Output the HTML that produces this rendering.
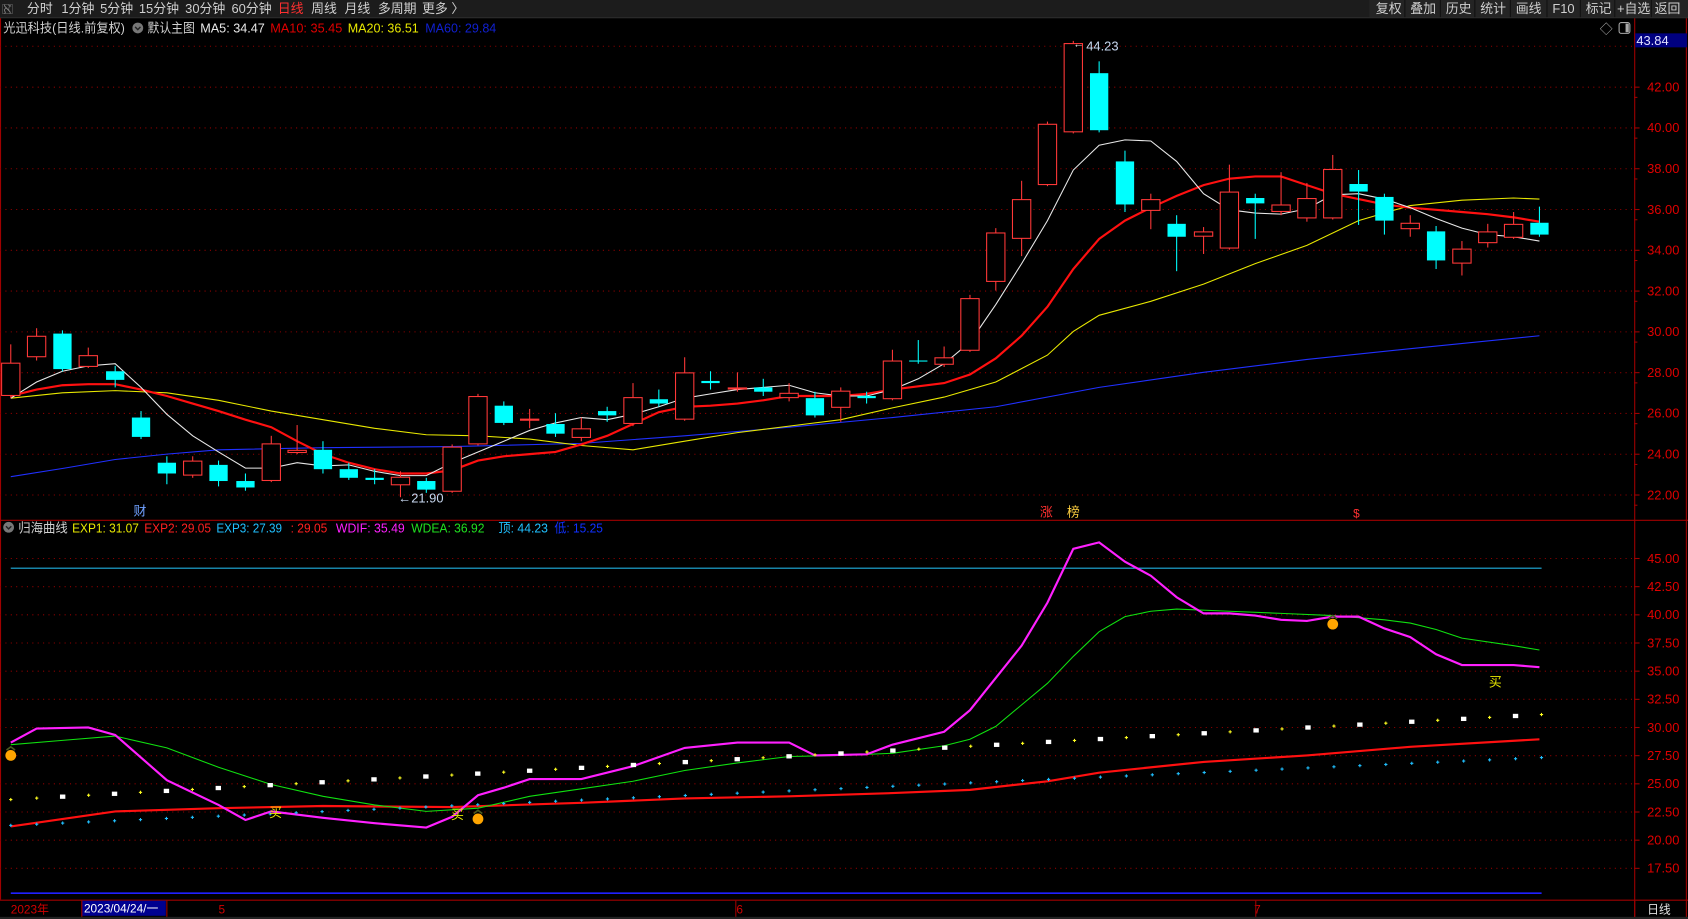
<!DOCTYPE html>
<html><head><meta charset="utf-8"><style>
html,body{margin:0;padding:0;background:#000;width:1688px;height:919px;overflow:hidden}
svg{display:block}
text{font-family:"Liberation Sans","Noto Sans CJK SC",sans-serif}
</style></head><body>
<svg id="s" width="1688" height="919" viewBox="0 0 1568 854" preserveAspectRatio="none" xmlns="http://www.w3.org/2000/svg">
<rect width="1568" height="854" fill="#000"/>
<rect width="1568" height="16" fill="#1c1c1c"/>
<line x1="0" y1="16.5" x2="1568" y2="16.5" stroke="#333"/>
<g font-size="12" fill="#d0d0d0">
<text x="2" y="12" font-size="10" fill="#888">ℵ⃞</text>
<text x="25" y="12">分时</text><text x="57" y="12">1分钟</text><text x="93" y="12">5分钟</text><text x="129" y="12">15分钟</text><text x="172" y="12">30分钟</text><text x="215" y="12">60分钟</text>
<text x="258" y="12" fill="#ff3030">日线</text><text x="289" y="12">周线</text><text x="320" y="12">月线</text><text x="351" y="12">多周期</text><text x="392" y="12">更多 〉</text>
</g>
<g font-size="12" fill="#d0d0d0">
<rect x="1272" y="0" width="296" height="16" fill="#242424"/>
<text x="1278" y="12">复权</text><text x="1310" y="12">叠加</text><text x="1343" y="12">历史</text><text x="1375" y="12">统计</text><text x="1408" y="12">画线</text><text x="1442" y="12">F10</text><text x="1473" y="12">标记</text><text x="1502" y="12">+自选</text><text x="1537" y="12">返回</text>
<g stroke="#111"><line x1="1305" y1="0" x2="1305" y2="16"/><line x1="1338" y1="0" x2="1338" y2="16"/><line x1="1370" y1="0" x2="1370" y2="16"/><line x1="1403" y1="0" x2="1403" y2="16"/><line x1="1437" y1="0" x2="1437" y2="16"/><line x1="1468" y1="0" x2="1468" y2="16"/><line x1="1500" y1="0" x2="1500" y2="16"/><line x1="1534" y1="0" x2="1534" y2="16"/></g>
</g>
<g stroke="#a00000" stroke-width="1">
<line x1="1518.5" y1="17" x2="1518.5" y2="854"/>
<line x1="0" y1="483.5" x2="1568" y2="483.5"/>
<line x1="0" y1="836.5" x2="1568" y2="836.5"/>
<line x1="1566.5" y1="17" x2="1566.5" y2="854"/>
<line x1="0.5" y1="17" x2="0.5" y2="836"/>
</g>
<g id="grid"></g>
<g id="lines"></g>
<g id="candles"></g>
<g font-size="12">
<text x="3" y="30" fill="#d0d0d0" textLength="113" lengthAdjust="spacingAndGlyphs">光迅科技(日线.前复权)</text>
<circle cx="128" cy="26" r="5" fill="#777"/><path d="M125.5 25 L128 27.5 L130.5 25" stroke="#222" fill="none" stroke-width="1.3"/>
<text x="137" y="30" fill="#d0d0d0" textLength="44" lengthAdjust="spacingAndGlyphs">默认主图</text>
<text x="186" y="30" fill="#e8e8e8" textLength="60" lengthAdjust="spacingAndGlyphs">MA5: 34.47</text>
<text x="251" y="30" fill="#e00000" textLength="67" lengthAdjust="spacingAndGlyphs">MA10: 35.45</text>
<text x="323" y="30" fill="#e8e800" textLength="66" lengthAdjust="spacingAndGlyphs">MA20: 36.51</text>
<text x="395" y="30" fill="#1020d0" textLength="66" lengthAdjust="spacingAndGlyphs">MA60: 29.84</text>
<text x="1486" y="31" fill="#aaa">◇</text>
<rect x="1504" y="21" width="10" height="10" rx="2" fill="none" stroke="#aaa"/><rect x="1510" y="22" width="3" height="8" fill="#aaa"/>
<rect x="1519" y="31" width="48" height="13" fill="#000080"/>
<text x="1520" y="42" fill="#e0e0ff">43.84</text>
<text x="1009" y="47" fill="#c8d8f0">44.23</text>
<text x="997" y="44" fill="#ddd" font-size="10">←</text>
<text x="370" y="467" fill="#c8d8f0">←21.90</text>
<text x="124" y="479" fill="#6fa0ff">财</text>
<text x="966" y="480" fill="#ff3030">涨</text><text x="991" y="480" fill="#ffd040">榜</text>
<text x="1257" y="481" fill="#ff3030" font-size="11">$</text>
</g>
<g font-size="12">
<circle cx="8" cy="490" r="5" fill="#777"/><path d="M5.5 489 L8 491.5 L10.5 489" stroke="#222" fill="none" stroke-width="1.3"/>
<text x="17" y="495" fill="#d0d0d0" textLength="46" lengthAdjust="spacingAndGlyphs">归海曲线</text>
<text x="67" y="495" fill="#e8e800" textLength="62" lengthAdjust="spacingAndGlyphs">EXP1: 31.07</text>
<text x="134" y="495" fill="#ff2020" textLength="62" lengthAdjust="spacingAndGlyphs">EXP2: 29.05</text>
<text x="201" y="495" fill="#20c0ff" textLength="61" lengthAdjust="spacingAndGlyphs">EXP3: 27.39</text>
<text x="270" y="495" fill="#ff2020" textLength="34" lengthAdjust="spacingAndGlyphs">: 29.05</text>
<text x="312" y="495" fill="#ff20ff" textLength="64" lengthAdjust="spacingAndGlyphs">WDIF: 35.49</text>
<text x="382" y="495" fill="#20e020" textLength="68" lengthAdjust="spacingAndGlyphs">WDEA: 36.92</text>
<text x="463" y="495" fill="#20c0ff" textLength="46" lengthAdjust="spacingAndGlyphs">顶: 44.23</text>
<text x="515" y="495" fill="#1030ff" textLength="45" lengthAdjust="spacingAndGlyphs">低: 15.25</text>
</g>
<g id="axis" font-size="12" fill="#e00000"></g>
<g font-size="11">
<text x="10" y="849" fill="#d00000">2023年</text>
<rect x="76" y="837" width="78" height="14" fill="#000090"/>
<text x="78" y="848" fill="#fff">2023/04/24/一</text>
<text x="203" y="849" fill="#d00000">5</text>
<text x="684" y="849" fill="#d00000">6</text>
<text x="1165" y="849" fill="#d00000">7</text>
<text x="1530" y="849" fill="#e0e0e0">日线</text>
</g>
<g stroke="#a00000"><line x1="76" y1="837" x2="76" y2="852"/><line x1="155" y1="837" x2="155" y2="852"/><line x1="683.5" y1="837" x2="683.5" y2="852"/><line x1="1166.5" y1="837" x2="1166.5" y2="852"/><line x1="1518.5" y1="837" x2="1518.5" y2="852"/></g>
<rect x="0" y="852" width="1568" height="2" fill="#222"/>
</svg>
<script>
var NS="http://www.w3.org/2000/svg";
function el(p,t,a){var e=document.createElementNS(NS,t);for(var k in a)e.setAttribute(k,a[k]);p.appendChild(e);return e;}
var grid=document.getElementById('grid'),lines=document.getElementById('lines'),cg=document.getElementById('candles'),ax=document.getElementById('axis');
var pl=[42,40,38,36,34,32,30,28,26,24,22];
pl.forEach(function(p){var y=81+(42-p)*18.95;el(grid,'line',{x1:0,x2:1518,y1:y,y2:y,stroke:'#900000','stroke-dasharray':'1 4'});var t=el(ax,'text',{x:1530,y:y+4});t.textContent=p.toFixed(2);el(grid,'line',{x1:1518,x2:1523,y1:y,y2:y,stroke:'#a00000'});el(grid,'line',{x1:1518,x2:1521,y1:y+9.5,y2:y+9.5,stroke:'#a00000'});});
el(grid,'line',{x1:0,x2:1518,y1:43,y2:43,stroke:'#900000','stroke-dasharray':'1 4'});
var il=[45,42.5,40,37.5,35,32.5,30,27.5,25,22.5,20,17.5];
il.forEach(function(v){var y=519+(45-v)*10.47;el(grid,'line',{x1:0,x2:1518,y1:y,y2:y,stroke:'#900000','stroke-dasharray':'1 4'});var t=el(ax,'text',{x:1530,y:y+4});t.textContent=v.toFixed(2);el(grid,'line',{x1:1518,x2:1523,y1:y,y2:y,stroke:'#a00000'});});
function poly(pts,c,w){el(lines,'polyline',{points:pts.map(function(p){return p.join(',')}).join(' '),fill:'none',stroke:c,'stroke-width':w||1});}
el(lines,'line',{x1:10,x2:1432,y1:528,y2:528,stroke:'#20b0e0'});
el(lines,'line',{x1:10,x2:1432,y1:830,y2:830,stroke:'#2020ff','stroke-width':1.5});
poly([[10,443],[60,435],[107,427],[155,422],[203,418],[300,416],[420,415],[540,412],[636,405],[733,397],[829,388],[925,378],[1021,360],[1118,346],[1214,334],[1310,324],[1430,312]],'#2030ff');
poly([[10,370],[58,365],[107,363],[155,365],[203,372],[252,382],[300,390],[348,398],[396,404],[444,405],[492,408],[540,414],[588,418],[636,410],[685,402],[733,396],[781,390],[829,379],[877,369],[925,355],[973,330],[997,308],[1021,293],[1069,280],[1118,264],[1166,245],[1214,228],[1262,205],[1310,191],[1358,186],[1406,184],[1430,185]],'#e8e800');
poly([[10,368],[34,362],[58,358],[82,357],[107,357],[131,362],[155,368],[179,375],[203,382],[228,390],[252,397],[276,410],[300,422],[324,430],[348,436],[372,440],[396,440],[420,437],[444,428],[468,424],[492,422],[516,420],[540,413],[564,405],[588,394],[612,383],[636,378],[660,377],[685,375],[709,372],[733,368],[757,368],[781,368],[805,366],[829,362],[853,359],[877,356],[901,348],[925,333],[949,312],[973,285],[997,250],[1021,222],[1045,205],[1069,193],[1093,182],[1118,172],[1142,166],[1166,164],[1190,164],[1214,172],[1238,180],[1262,185],[1286,190],[1310,193],[1334,195],[1358,197],[1382,199],[1406,202],[1430,206]],'#ff1010',2);
poly([[10,370],[34,355],[58,345],[82,340],[107,338],[131,360],[155,385],[179,405],[203,420],[228,435],[252,435],[276,430],[300,433],[324,432],[348,438],[372,442],[396,442],[420,430],[444,420],[468,410],[492,400],[516,393],[540,388],[564,390],[588,385],[612,378],[636,370],[660,366],[685,362],[709,360],[733,358],[757,365],[781,368],[805,368],[829,362],[853,352],[877,338],[901,318],[925,283],[949,245],[973,205],[997,158],[1021,135],[1045,130],[1069,131],[1093,150],[1118,180],[1142,195],[1166,198],[1190,199],[1214,194],[1238,181],[1262,180],[1286,185],[1310,193],[1334,203],[1358,212],[1382,218],[1406,220],[1430,224]],'#e8e8e8');
var C=[[10,337,367,320,370,'r'],[34,312,331,305,335,'r'],[58,310,343,307,345,'c'],[82,330,340,323,342,'r'],[107,345,353,340,360,'c'],[131,388,406,382,408,'c'],[155,430,440,424,450,'c'],[179,428,441,424,444,'r'],[203,432,447,428,452,'c'],[228,447,453,440,456,'c'],[252,412,446,405,448,'r'],[276,418,420,395,422,'r'],[300,418,436,410,440,'c'],[324,436,444,430,446,'c'],[348,444,446,436,450,'c'],[372,443,450,438,462,'r'],[396,447,455,444,458,'c'],[420,415,456,413,458,'r'],[444,368,412,366,414,'r'],[468,377,393,373,395,'c'],[492,389,390,380,398,'r'],[516,394,403,384,406,'c'],[540,398,406,388,410,'r'],[564,382,386,378,392,'c'],[588,369,393,356,396,'r'],[612,371,375,362,378,'c'],[636,346,389,332,391,'r'],[660,354,356,345,362,'c'],[685,360,361,346,364,'r'],[709,360,364,352,368,'c'],[733,365,369,356,373,'r'],[757,370,386,364,388,'c'],[781,363,378,360,392,'r'],[805,368,370,364,375,'c'],[829,335,370,325,372,'r'],[853,335,336,316,338,'c'],[877,332,338,322,341,'r'],[901,277,325,274,327,'r'],[925,216,261,212,270,'r'],[949,185,221,168,238,'r'],[973,115,171,113,173,'r'],[997,40,122,38,124,'r'],[1021,68,121,57,123,'c'],[1045,150,190,140,197,'c'],[1069,185,195,180,213,'r'],[1093,208,220,200,252,'c'],[1118,215,219,211,236,'r'],[1142,178,230,153,232,'r'],[1166,184,189,180,222,'c'],[1190,190,196,160,200,'r'],[1214,184,202,170,206,'r'],[1238,157,202,144,204,'r'],[1262,171,178,158,209,'c'],[1286,183,205,180,218,'c'],[1310,207,212,200,220,'r'],[1334,215,242,210,250,'c'],[1358,231,244,224,256,'r'],[1382,215,225,208,230,'r'],[1406,208,220,197,222,'r'],[1430,207,218,192,220,'c']];
C.forEach(function(c){var x=c[0],col=c[5]=='r'?'#ff3838':'#00ffff';
 el(cg,'line',{x1:x,x2:x,y1:c[3],y2:c[4],stroke:col});
 var h=Math.max(1,c[2]-c[1]);
 if(c[5]=='r'){el(cg,'rect',{x:x-8.5,y:c[1]+0.5,width:17,height:h,fill:'#000',stroke:col});}
 else el(cg,'rect',{x:x-8.5,y:c[1],width:17,height:h,fill:col});
});
poly([[10,768],[107,754],[203,751],[300,749],[420,750],[540,746],[636,742],[733,740],[829,737],[901,734],[973,726],[1021,718],[1118,708],[1214,702],[1310,694],[1430,687]],'#ff1010',2);
poly([[10,692],[58,688],[107,684],[155,695],[203,713],[252,729],[300,740],[348,748],[396,754],[444,751],[492,740],[540,733],[588,726],[636,716],[685,709],[733,703],[781,702],[829,700],[877,693],[901,687],[925,675],[949,655],[973,635],[997,610],[1021,587],[1045,573],[1069,568],[1093,566],[1142,568],[1190,570],[1238,572],[1286,576],[1310,579],[1334,585],[1358,593],[1406,600],[1430,604]],'#10e010');
poly([[10,690],[34,677],[82,676],[107,683],[155,725],[203,748],[228,762],[252,754],[300,760],[348,765],[396,769],[420,759],[444,739],[468,732],[492,724],[540,724],[588,712],[636,695],[685,690],[733,690],[757,702],[805,701],[829,692],[877,680],[901,660],[925,630],[949,600],[973,560],[997,510],[1021,504],[1045,522],[1069,535],[1093,555],[1118,570],[1142,570],[1166,572],[1190,576],[1214,577],[1238,573],[1262,573],[1286,584],[1310,592],[1334,608],[1358,618],[1406,618],[1430,620]],'#ff20ff',2);
for(var i=0;i<60;i++){var x=10+24.1*i;var f=i/59;
 var y1=743-79*f;
 if(i%2==0 && i>0) el(cg,'rect',{x:x-2.5,y:y1-2,width:5,height:4,fill:'#fff'});
 else { el(cg,'rect',{x:x-1.5,y:y1-0.5,width:3,height:1,fill:'#ffff20'}); el(cg,'rect',{x:x-0.5,y:y1-1.5,width:1,height:3,fill:'#ffff20'}); }
 var y2=767-63*f; el(cg,'rect',{x:x-1.5,y:y2-0.5,width:3,height:1,fill:'#20c0ff'}); el(cg,'rect',{x:x-0.5,y:y2-1.5,width:1,height:3,fill:'#20c0ff'});
}
[[10,702],[444,761],[1238,580]].forEach(function(p){el(cg,'circle',{cx:p[0],cy:p[1],r:5,fill:'#ffa500'});el(cg,'path',{d:'M'+(p[0]-4)+' '+(p[1]-5)+' L'+p[0]+' '+(p[1]-8)+' L'+(p[0]+4)+' '+(p[1]-5),stroke:'#4a5a20',fill:'none','stroke-width':1.5});});
[[250,759],[419,761],[1383,638]].forEach(function(p){var t=el(cg,'text',{x:p[0],y:p[1],fill:'#e8e800','font-size':12});t.textContent='买';});
</script>
</body></html>
